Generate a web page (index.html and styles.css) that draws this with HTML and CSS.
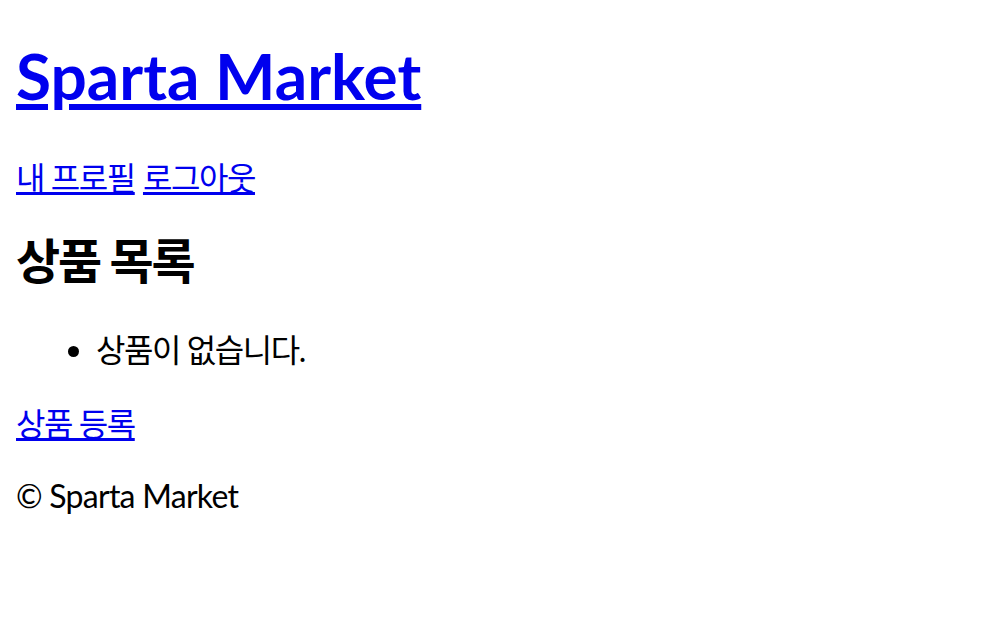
FILE: index.html
```html
<!DOCTYPE html>
<html lang="ko">
<head>
<meta charset="utf-8">
<title>Sparta Market</title>
<link rel="stylesheet" href="styles.css">
</head>
<body>
<header>
<h1 class="title"><a href="#">Sparta Market</a></h1>
<nav class="nav"><a class="ko" href="#">내 프로필</a> <a class="ko" href="#">로그아웃</a></nav>
</header>
<main>
<h2 class="section-title ko">상품 목록</h2>
<ul class="list ko">
<li>상품이 없습니다.</li>
</ul>
<a class="create ko" href="#">상품 등록</a>
</main>
<footer class="footer">
<p>© Sparta Market</p>
</footer>
</body>
</html>
```
FILE: styles.css
```css
body {
  margin: 16px;
  font-family: "Lato", "Noto Sans CJK KR", sans-serif;
  font-size: 32px;
  line-height: 37px;
  color: #000;
}
a { color: #0000ee; }
.ko { letter-spacing: -0.045em; }
.title {
  font-size: 64px;
  line-height: 74px;
  margin: 23px 0 46px;
  font-weight: 700;
}
.nav { margin: 32px 0; }
.section-title {
  font-size: 48px;
  line-height: 55px;
  margin: 37px 0 43px;
  font-weight: 700;
}
.list {
  margin: 32px 0 37px;
  padding-left: 80px;
}
.footer p {
  margin: 35px 0 32px;
  letter-spacing: -0.023em;
}
```
